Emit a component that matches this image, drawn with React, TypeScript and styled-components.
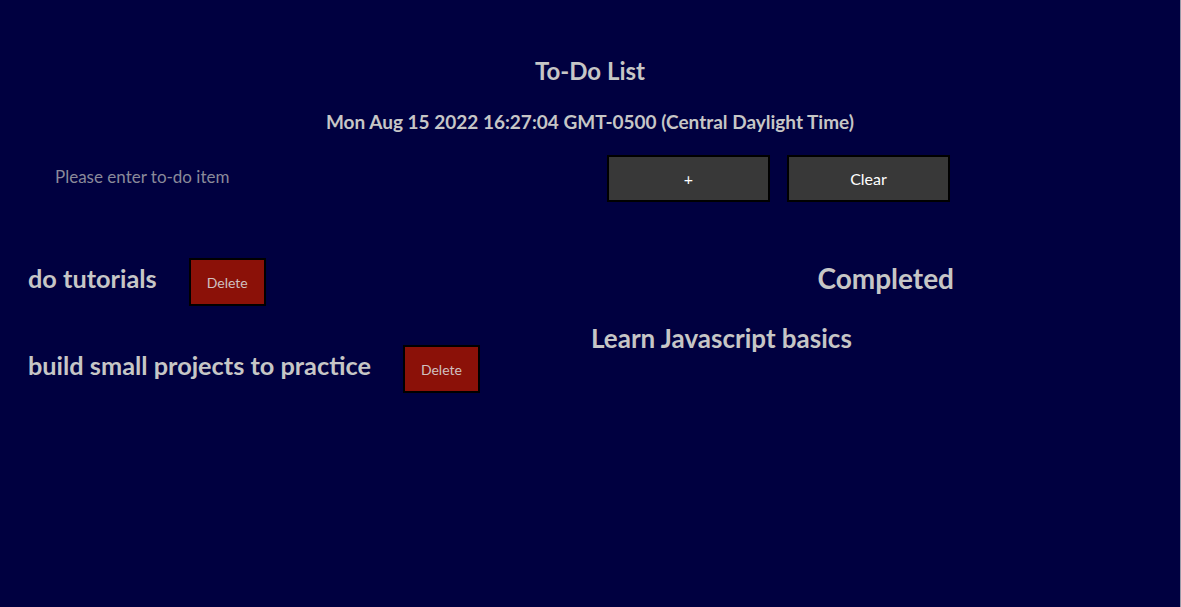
import React from 'react';
import styled, { createGlobalStyle } from 'styled-components';

const GlobalStyle = createGlobalStyle`
  html, body {
    margin: 0;
    padding: 0;
    background: #000040;
    min-height: 100%;
  }
  body {
    font-family: Lato, "Open Sans", sans-serif;
    color: #c8c8c8;
  }
`;

const Page = styled.div`
  width: 1181px;
  height: 607px;
  box-sizing: border-box;
  background: #000040;
  padding-top: 56px;
  border-right: 1px solid #9a9aa8;
`;

const Header = styled.header`
  display: flex;
  flex-direction: column;
  align-items: center;
`;

const Title = styled.h1`
  margin: 0;
  font-size: 24px;
  line-height: 29px;
  font-weight: 700;
  color: #c6c6c6;
`;

const DateLine = styled.p`
  margin: 25px 0 0;
  font-size: 19px;
  line-height: 23px;
  font-weight: 700;
  color: #c6c6c6;
`;

const Form = styled.form`
  display: flex;
  align-items: center;
  margin-top: 22px;
`;

const Input = styled.input`
  width: 552px;
  margin: 0 0 5px 55px;
  padding: 0;
  border: none;
  background: transparent;
  font-family: inherit;
  font-size: 17px;
  color: #c6c6c6;
  outline: none;
  &::placeholder {
    color: #8a8a9a;
  }
`;

const Buttons = styled.div`
  display: flex;
  gap: 17px;
`;

const ActionButton = styled.button`
  width: 163px;
  height: 47px;
  background: #383838;
  border: 2px solid #000;
  color: #fff;
  font-family: inherit;
  font-size: 16px;
`;

const Main = styled.main`
  display: flex;
  margin-top: 56px;
`;

const Column = styled.section<{ $width: number }>`
  width: ${(p) => p.$width}px;
  box-sizing: border-box;
`;

const TodoRow = styled.div`
  display: flex;
  align-items: center;
  gap: 32px;
  padding-left: 28px;
  margin-bottom: 39px;
`;

const ItemText = styled.span`
  padding-bottom: 8px;
  font-size: 25.3px;
  font-weight: 700;
  color: #c6c6c6;
`;

const DeleteButton = styled.button`
  width: 77px;
  height: 48px;
  background: #8b1108;
  border: 2px solid #000;
  color: #d0c0c0;
  font-family: inherit;
  font-size: 14px;
`;

const CompletedHeading = styled.h2`
  margin: 3px 0 28px;
  text-align: right;
  font-size: 28px;
  line-height: 34px;
  font-weight: 700;
  color: #c6c6c6;
`;

const CompletedItem = styled.p`
  margin: 0;
  font-size: 26px;
  line-height: 31px;
  font-weight: 700;
  color: #c6c6c6;
`;

const todos = ['do tutorials', 'build small projects to practice'];

const App: React.FC = () => {
  return (
    <Page>
      <GlobalStyle />
      <Header>
        <Title>To-Do List</Title>
        <DateLine>Mon Aug 15 2022 16:27:04 GMT-0500 (Central Daylight Time)</DateLine>
      </Header>
      <Form onSubmit={(e) => e.preventDefault()}>
        <Input placeholder="Please enter to-do item" />
        <Buttons>
          <ActionButton type="submit">+</ActionButton>
          <ActionButton type="button">Clear</ActionButton>
        </Buttons>
      </Form>
      <Main>
        <Column $width={591}>
          {todos.map((t) => (
            <TodoRow key={t}>
              <ItemText>{t}</ItemText>
              <DeleteButton>Delete</DeleteButton>
            </TodoRow>
          ))}
        </Column>
        <Column $width={363}>
          <CompletedHeading>Completed</CompletedHeading>
          <CompletedItem>Learn Javascript basics</CompletedItem>
        </Column>
      </Main>
    </Page>
  );
};

export default App;
